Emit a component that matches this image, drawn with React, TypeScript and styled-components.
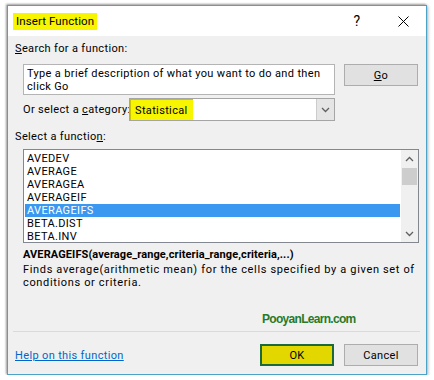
import React from "react";
import styled, { createGlobalStyle } from "styled-components";

const GlobalStyle = createGlobalStyle`
  body {
    margin: 0;
    background: #fff;
    font-family: Roboto, "Open Sans", sans-serif;
    color: #000;
  }
`;

const functions = [
  "AVEDEV",
  "AVERAGE",
  "AVERAGEA",
  "AVERAGEIF",
  "AVERAGEIFS",
  "BETA.DIST",
  "BETA.INV",
];

const Page = styled.div`
  padding: 5px 0 0 7px;
`;

const Dialog = styled.div`
  width: 420px;
  height: 370px;
  box-sizing: border-box;
  border: 1px solid #4ba3c7;
  box-shadow: -1px -1px 2px rgba(0, 0, 0, 0.35), 1px 1px 3px rgba(0, 0, 0, 0.3);
  background: #f0f0f0;
  display: flex;
  flex-direction: column;
  font-size: 11px;
  letter-spacing: 0.35px;
`;

const TitleBar = styled.div`
  height: 30px;
  background: #fff;
  display: flex;
  align-items: center;
  padding-left: 5px;
`;

const Title = styled.span`
  background: #f7f500;
  font-size: 11.5px;
  letter-spacing: 0.1px;
  line-height: 17px;
  padding: 0 3px;
`;

const TitleButton = styled.div<{ $first?: boolean }>`
  width: 46px;
  height: 30px;
  display: flex;
  align-items: center;
  justify-content: center;
  margin-left: ${(p) => (p.$first ? "auto" : "0")};
  font-size: 14px;
`;

const Label = styled.div<{ $top: number }>`
  margin: ${(p) => p.$top}px 0 0 7px;
  line-height: 16px;
`;

const Row = styled.div<{ $top: number }>`
  display: flex;
  align-items: flex-start;
  margin-top: ${(p) => p.$top}px;
  padding-left: 15px;
`;

const SearchBox = styled.div`
  width: 312px;
  height: 31px;
  box-sizing: border-box;
  background: #fff;
  border: 1px solid #b4b4b4;
  padding: 2px 3px 0;
  line-height: 13px;
  white-space: nowrap;
`;

const Button = styled.div<{ $primary?: boolean }>`
  width: 74px;
  height: 22px;
  box-sizing: border-box;
  display: flex;
  align-items: center;
  justify-content: center;
  background: ${(p) => (p.$primary ? "#e3d700" : "#e1e1e1")};
  border: ${(p) => (p.$primary ? "2px solid #1b6a3c" : "1px solid #adadad")};
`;

const GoButton = styled(Button)`
  margin-left: 9px;
`;

const CategoryRow = styled(Row)`
  align-items: center;
  height: 23px;
`;

const CategoryLabel = styled.span`
  width: 106px;
  flex: none;
  white-space: nowrap;
`;

const Select = styled.div`
  width: 206px;
  height: 23px;
  box-sizing: border-box;
  border: 1px solid #a5a5a5;
  background: #fff;
  display: flex;
`;

const SelectValue = styled.span`
  background: #f7f500;
  border: 1px solid #c8c200;
  border-right: none;
  border-bottom: none;
  padding: 0 5px 0 4px;
  display: flex;
  align-items: center;
`;

const SelectArrow = styled.div`
  margin-left: auto;
  width: 17px;
  background: #e5e5e5;
  border-left: 1px solid #cccccc;
  display: flex;
  align-items: center;
  justify-content: center;
`;

const List = styled.div`
  margin: 4px 0 0 15px;
  width: 396px;
  height: 94px;
  box-sizing: border-box;
  border: 1px solid #828790;
  background: #fff;
  display: flex;
`;

const Items = styled.div`
  flex: 1;
  padding: 2px 1px 0;
`;

const Item = styled.div<{ $selected?: boolean }>`
  height: 13px;
  line-height: 13px;
  padding-left: 2px;
  background: ${(p) => (p.$selected ? "#3b98f0" : "transparent")};
  color: ${(p) => (p.$selected ? "#fff" : "#000")};
`;

const Scrollbar = styled.div`
  width: 17px;
  background: #f0f0f0;
  display: flex;
  flex-direction: column;
  align-items: center;
`;

const ScrollArrow = styled.div`
  height: 17px;
  display: flex;
  align-items: center;
  justify-content: center;
`;

const Thumb = styled.div`
  width: 15px;
  height: 17px;
  background: #cdcdcd;
  margin-top: 1px;
`;

const Signature = styled.div`
  margin: 4px 0 0 15px;
  line-height: 16px;
  font-weight: 700;
  letter-spacing: 0.1px;
`;

const Description = styled.div`
  margin: 0 0 0 15px;
  line-height: 13px;
  letter-spacing: 0.65px;
`;

const Watermark = styled.div`
  margin-top: 22px;
  padding-left: 254px;
  line-height: 16px;
  font-family: "Liberation Sans", Arial, sans-serif;
  font-weight: 700;
  font-size: 12px;
  letter-spacing: -0.7px;
  color: #287a28;
`;

const Separator = styled.div`
  margin: 4px 6px 0 5px;
  height: 1px;
  background: #dadada;
`;

const Footer = styled.div`
  margin-top: 12px;
  display: flex;
  align-items: center;
  padding: 0 8px 0 7px;
  gap: 10px;
`;

const HelpLink = styled.a`
  color: #0066cc;
  text-decoration: underline;
  margin-right: auto;
  cursor: pointer;
`;

const Chevron = ({ up }: { up?: boolean }) => (
  <svg width="9" height="6" viewBox="0 0 9 6">
    <polyline
      points={up ? "1,5 4.5,1.5 8,5" : "1,1 4.5,4.5 8,1"}
      fill="none"
      stroke="#606060"
      strokeWidth="1.3"
    />
  </svg>
);

const App: React.FC = () => (
  <Page>
    <GlobalStyle />
    <Dialog>
      <TitleBar>
        <Title>Insert Function</Title>
        <TitleButton $first>?</TitleButton>
        <TitleButton>
          <svg width="11" height="11" viewBox="0 0 11 11">
            <path d="M0.5 0.5 L10.5 10.5 M10.5 0.5 L0.5 10.5" stroke="#000" strokeWidth="1" />
          </svg>
        </TitleButton>
      </TitleBar>

      <Label $top={5}>
        <u>S</u>earch for a function:
      </Label>
      <Row $top={7}>
        <SearchBox>
          Type a brief description of what you want to do and then
          <br />
          click Go
        </SearchBox>
        <GoButton>
          <u>G</u>o
        </GoButton>
      </Row>
      <CategoryRow $top={3}>
        <CategoryLabel>
          Or select a <u>c</u>ategory:
        </CategoryLabel>
        <Select>
          <SelectValue>Statistical</SelectValue>
          <SelectArrow>
            <Chevron />
          </SelectArrow>
        </Select>
      </CategoryRow>

      <Label $top={8}>
        Select a functio<u>n</u>:
      </Label>
      <List>
        <Items>
          {functions.map((f) => (
            <Item key={f} $selected={f === "AVERAGEIFS"}>
              {f}
            </Item>
          ))}
        </Items>
        <Scrollbar>
          <ScrollArrow>
            <Chevron up />
          </ScrollArrow>
          <Thumb />
          <ScrollArrow style={{ marginTop: "auto" }}>
            <Chevron />
          </ScrollArrow>
        </Scrollbar>
      </List>

      <Signature>AVERAGEIFS(average_range,criteria_range,criteria,...)</Signature>
      <Description>
        Finds average(arithmetic mean) for the cells specified by a given set of
        <br />
        conditions or criteria.
      </Description>
      <Watermark>PooyanLearn.com</Watermark>
      <Separator />

      <Footer>
        <HelpLink>Help on this function</HelpLink>
        <Button $primary>OK</Button>
        <Button>Cancel</Button>
      </Footer>
    </Dialog>
  </Page>
);

export default App;
